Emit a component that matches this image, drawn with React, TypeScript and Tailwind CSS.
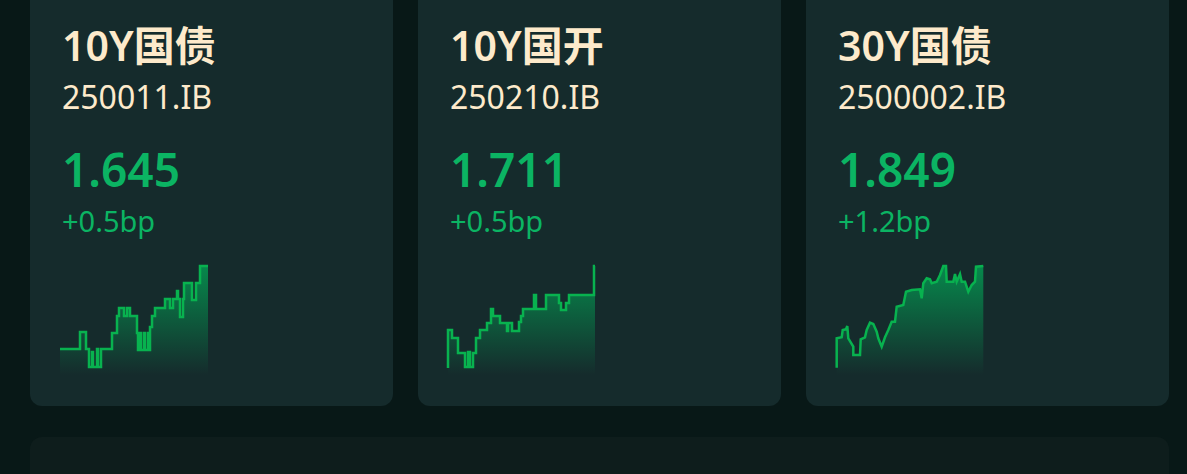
import React from "react";

type Pt = [number, number];

function stepPoints(start: Pt, steps: Pt[], endX: number): Pt[] {
  const pts: Pt[] = [start];
  let y = start[1];
  for (const [x, ny] of steps) {
    pts.push([x, y]);
    pts.push([x, ny]);
    y = ny;
  }
  pts.push([endX, y]);
  return pts;
}

const bonds = [
  {
    name: "10Y国债",
    code: "250011.IB",
    value: "1.645",
    change: "+0.5bp",
    points: stepPoints(
      [0, 84],
      [
        [20, 67], [26, 84], [29, 102], [32, 87], [33, 102], [37, 84], [38, 102], [41, 84],
        [52, 68], [57, 51], [59, 43], [64, 51], [67, 43], [70, 51], [77, 68], [78, 85],
        [80, 68], [81, 85], [84, 68], [85, 85], [88, 68], [89, 85], [90, 62], [92, 51],
        [95, 43], [105, 34], [110, 43], [113, 34], [117, 26], [118, 34], [120, 52], [123, 34],
        [124, 18], [132, 35], [136, 18], [140, 1],
      ],
      148
    ),
  },
  {
    name: "10Y国开",
    code: "250210.IB",
    value: "1.711",
    change: "+0.5bp",
    points: stepPoints(
      [0, 103],
      [
        [0, 65], [4, 73], [10, 88], [17, 102], [20, 87], [22, 102], [25, 88], [28, 73],
        [32, 65], [39, 58], [43, 44], [45, 51], [52, 58], [59, 66], [60, 58], [64, 66],
        [71, 57], [73, 51], [75, 44], [86, 30], [88, 44], [97, 44], [98, 30], [111, 38],
        [113, 45], [118, 38], [121, 30], [146, 1],
      ],
      147
    ),
  },
  {
    name: "30Y国债",
    code: "2500002.IB",
    value: "1.849",
    change: "+1.2bp",
    points: [
      [0.7, 102.7], [0.7, 73.3], [5.7, 72.3], [6.7, 65], [10, 64.3], [11.3, 61], [12.3, 73.3],
      [17.3, 81.7], [17.3, 90], [24, 90], [24.7, 74.3], [29, 72.3], [30.7, 65], [34, 57.7],
      [37.3, 59], [40.7, 66.7], [42.3, 73.3], [45.7, 81.7], [49, 72.3], [52.3, 65], [55.7, 56.7],
      [59, 56.7], [60.7, 41.7], [67.3, 40], [70, 26.7], [75.7, 25], [84, 24.3], [85.7, 33.3],
      [87.3, 18.3], [90.7, 13.3], [94, 14.3], [95.7, 18.3], [100.7, 16.7], [104, 10], [107.3, 1],
      [110, 1], [110.7, 16.7], [117.3, 16.7], [119, 9], [120.7, 16.7], [124, 9], [125.7, 16.7],
      [129, 16.7], [132.3, 26.7], [135.7, 20], [139, 16.7], [140, 1.7], [147.3, 1],
    ] as Pt[],
  },
];

function Spark({ points, id }: { points: Pt[]; id: string }) {
  const line = points.map(([x, y], i) => `${i ? "L" : "M"}${x},${y}`).join(" ");
  const first = points[0];
  const last = points[points.length - 1];
  const area = `${line} L${last[0]},110 L${first[0]},110 Z`;
  return (
    <svg width="148" height="110" viewBox="0 0 148 110" className="block overflow-visible">
      <defs>
        <linearGradient id={id} x1="0" y1="0" x2="0" y2="110" gradientUnits="userSpaceOnUse">
          <stop offset="0" stopColor="#00b25a" stopOpacity="0.7" />
          <stop offset="1" stopColor="#00b25a" stopOpacity="0" />
        </linearGradient>
      </defs>
      <path d={area} fill={`url(#${id})`} />
      <path d={line} fill="none" stroke="#08b24f" strokeWidth="2.5" strokeLinejoin="miter" />
    </svg>
  );
}

export default function App() {
  return (
    <div
      className="min-h-screen bg-[#081817] pl-[30px] pr-[18px] overflow-hidden"
      style={{ fontFamily: '"Noto Sans", "Noto Sans CJK SC", sans-serif' }}
    >
      <div className="grid grid-cols-3 gap-[25px] -mt-[12px]">
        {bonds.map((b, i) => (
          <div key={b.code} className="rounded-xl bg-[#152b2c] px-8 pt-[33px] pb-[31px]">
            <p className="text-[41px] leading-[48px] font-semibold text-[#fdeacb]">{b.name}</p>
            <p className="mt-[8px] text-[32px] leading-[40px] text-[#fdeacb]">{b.code}</p>
            <p className="mt-[26px] text-[46px] leading-[52px] font-semibold text-[#0bb463]">{b.value}</p>
            <p className="mt-[9px] text-[29px] leading-[34px] text-[#0bb463]">{b.change}</p>
            <div className="mt-[27px] -ml-[2px]">
              <Spark points={b.points} id={`g${i}`} />
            </div>
          </div>
        ))}
      </div>
      <div className="mt-[31px] h-[80px] rounded-xl bg-[#0e1d1c]" />
    </div>
  );
}
